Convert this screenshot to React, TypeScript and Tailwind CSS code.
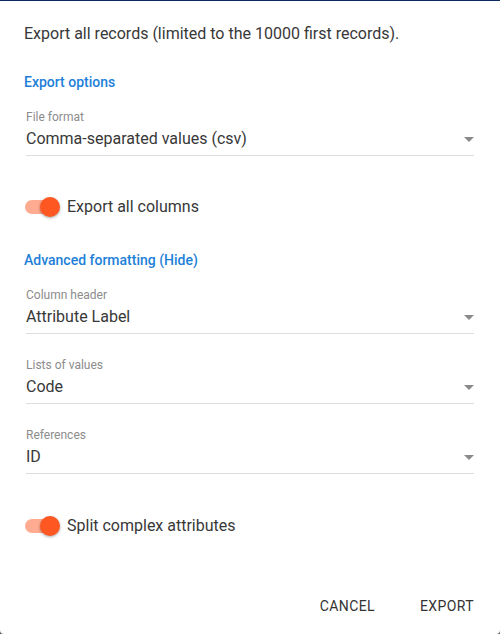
import React from "react";

const font = { fontFamily: "Roboto, 'Liberation Sans', sans-serif" };

function Arrow() {
    return (
        <svg width="24" height="24" viewBox="0 0 24 24" className="shrink-0 -mr-[7px]">
            <path d="M7 10l5 5 5-5z" fill="#8a8a8a" />
        </svg>
    );
}

function SelectField({ label, value }: { label: string; value: string }) {
    return (
        <div className="mx-[2px]">
            <div className="text-[12px] leading-4 text-[#8c8c8c]">{label}</div>
            <div className="flex items-center justify-between mt-[2px] pb-1 border-b border-[#dedede]">
                <span className="text-[16px] leading-6 text-[#383838]">{value}</span>
                <Arrow />
            </div>
        </div>
    );
}

function Toggle({ label }: { label: string }) {
    return (
        <div className="flex items-center h-[38px]">
            <div className="relative w-[34px] h-[14px] ml-[1px] rounded-full bg-[#ffab91]">
                <div className="absolute left-[15px] -top-[3px] w-5 h-5 rounded-full bg-[#ff5722] shadow-[0_1px_3px_rgba(0,0,0,0.35)]" />
            </div>
            <span className="ml-[8px] text-[16px] leading-6 text-[#383838]">{label}</span>
        </div>
    );
}

export default function App() {
    return (
        <div className="w-[500px] h-[634px] bg-[#5e5e5e] flex flex-col overflow-hidden" style={font}>
            <div className="h-px bg-[#0b2a60]" />
            <div className="flex-1 bg-white rounded-b-[4px] flex flex-col">
                <div className="px-6 pt-[21px]">
                    <div className="text-[16px] leading-6 text-[#383838]">
                        Export all records (limited to the 10000 first records).
                    </div>
                    <div className="mt-[26px] text-[14px] leading-5 font-medium text-[#1e7fd8]">Export options</div>
                    <div className="mt-[17px]">
                        <SelectField label="File format" value="Comma-separated values (csv)" />
                    </div>
                    <div className="mt-[32px]">
                        <Toggle label="Export all columns" />
                    </div>
                    <div className="mt-[24px] text-[14px] leading-5 font-medium text-[#1e7fd8]">Advanced formatting (Hide)</div>
                    <div className="mt-[17px] flex flex-col gap-[23px]">
                        <SelectField label="Column header" value="Attribute Label" />
                        <SelectField label="Lists of values" value="Code" />
                        <SelectField label="References" value="ID" />
                    </div>
                    <div className="mt-[33px]">
                        <Toggle label="Split complex attributes" />
                    </div>
                </div>
                <div className="mt-auto flex justify-end items-center gap-[45px] pr-[26px] pb-[10px]">
                    <button className="h-9 text-[14px] font-normal tracking-[0.4px] text-[#333333] uppercase">Cancel</button>
                    <button className="h-9 text-[14px] font-normal tracking-[0.4px] text-[#333333] uppercase">Export</button>
                </div>
            </div>
        </div>
    );
}
